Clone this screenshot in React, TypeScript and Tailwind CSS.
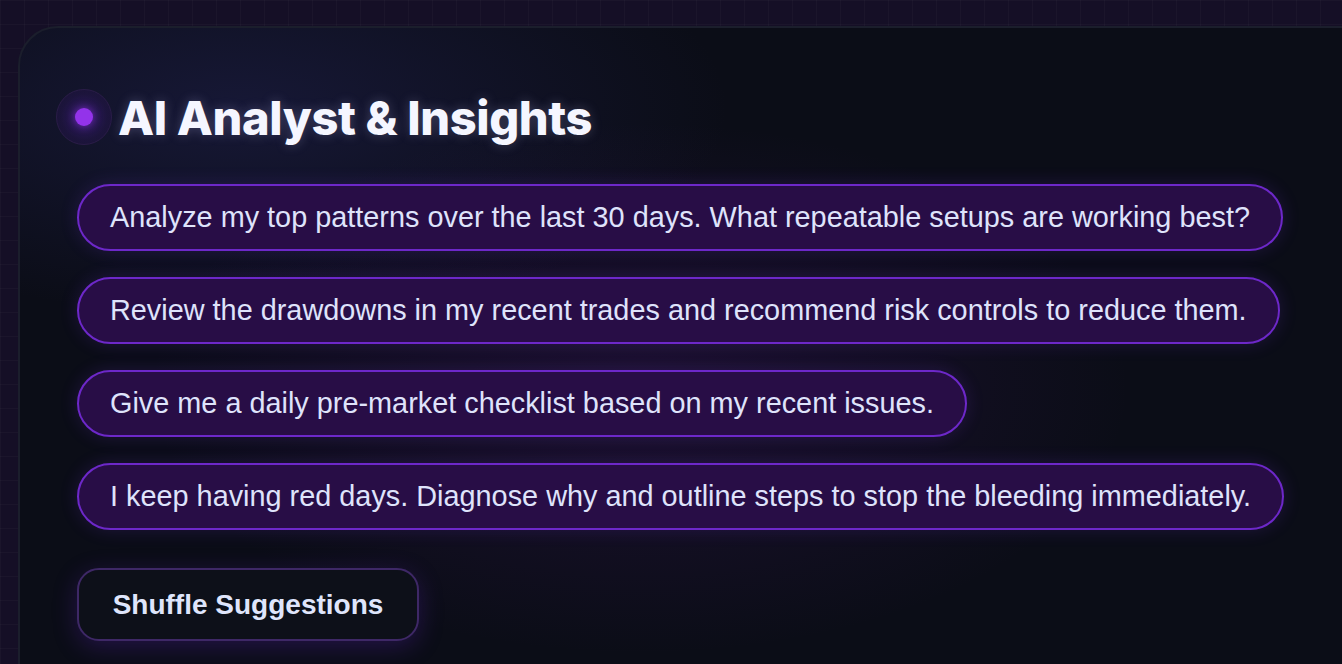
const SUGGESTIONS = [
  "Analyze my top patterns over the last 30 days. What repeatable setups are working best?",
  "Review the drawdowns in my recent trades and recommend risk controls to reduce them.",
  "Give me a daily pre-market checklist based on my recent issues.",
  "I keep having red days. Diagnose why and outline steps to stop the bleeding immediately.",
];

export default function App() {
  return (
    <div className="h-[664px] w-[1342px] overflow-hidden bg-[#150f26] bg-[linear-gradient(rgba(255,255,255,0.025)_1px,transparent_1px),linear-gradient(90deg,rgba(255,255,255,0.025)_1px,transparent_1px)] bg-[size:24px_24px] pl-[18px] pt-[26px]">
      <div className="h-[700px] w-[1400px] rounded-tl-[40px] border-2 border-[#1b1e2c] bg-[#0b0d17] bg-[radial-gradient(ellipse_700px_380px_at_620px_360px,rgba(88,28,135,0.22),transparent_70%),radial-gradient(ellipse_650px_280px_at_220px_80px,rgba(40,40,100,0.4),transparent_75%)] pl-[36px] pt-[61px]">
        <div className="flex items-center gap-[6px]">
          <div className="flex h-[56px] w-[56px] items-center justify-center rounded-full border border-[#2a1c48] bg-[radial-gradient(circle,rgba(109,40,217,0.35),rgba(40,20,80,0.45)_60%,rgba(30,18,60,0.55))]">
            <div className="h-[18px] w-[18px] rounded-full bg-[#9333ea] shadow-[0_0_8px_rgba(147,51,234,0.7)]" />
          </div>
          <h1 className="font-['Inter',sans-serif] text-[47px] font-extrabold leading-none tracking-[-0.008em] text-[#f5f6ff] [text-shadow:0_0_12px_rgba(200,200,255,0.25)]">
            AI Analyst &amp; Insights
          </h1>
        </div>

        <div className="mt-[39px] flex flex-col items-start gap-[26px] pl-[21px]">
          {SUGGESTIONS.map((s) => (
            <button
              key={s}
              className="flex h-[67px] items-center whitespace-nowrap rounded-full border-2 border-[#6d28c9] bg-[#280d46] px-[31px] font-['Liberation_Sans',Arial,sans-serif] text-[28.85px] text-[#dfe3fb] shadow-[0_0_18px_rgba(124,58,237,0.18)]"
            >
              {s}
            </button>
          ))}
          <button className="mt-[12px] flex h-[73px] w-[342px] items-center justify-center rounded-[22px] border-2 border-[#3e2866] bg-[#0d1019] font-['Liberation_Sans',Arial,sans-serif] text-[28px] font-bold text-[#dfe5fb] shadow-[0_6px_24px_rgba(109,40,217,0.25)]">
            Shuffle Suggestions
          </button>
        </div>
      </div>
    </div>
  );
}
